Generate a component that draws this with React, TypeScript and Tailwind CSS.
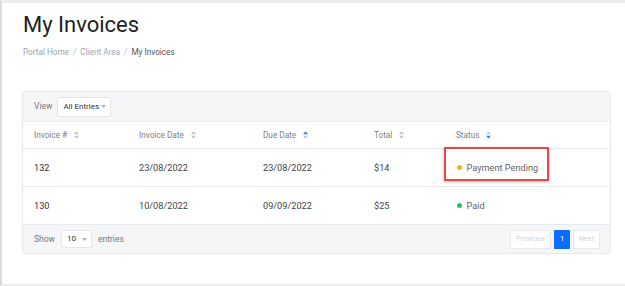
type Row = {
  id: string;
  invoiceDate: string;
  dueDate: string;
  total: string;
  status: "Payment Pending" | "Paid";
};

const rows: Row[] = [
  { id: "132", invoiceDate: "23/08/2022", dueDate: "23/08/2022", total: "$14", status: "Payment Pending" },
  { id: "130", invoiceDate: "10/08/2022", dueDate: "09/09/2022", total: "$25", status: "Paid" },
];

const cols = "grid grid-cols-[105px_124px_111px_82px_1fr] pl-[11px]";

function SortIcon({ active = "none" }: { active?: "none" | "up" | "down" }) {
  const up = active === "up" ? "#3b82f6" : active === "down" ? "#b9c9f5" : "#c4c8ce";
  const down = active === "down" ? "#3b82f6" : active === "up" ? "#b9c9f5" : "#c4c8ce";
  return (
    <svg width="5" height="8" viewBox="0 0 6 9" className="ml-[7px]">
      <path d="M3 0 L6 3.5 H0 Z" fill={up} />
      <path d="M3 9 L6 5.5 H0 Z" fill={down} />
    </svg>
  );
}

function Select({ label, w, h }: { label: string; w: string; h: string }) {
  return (
    <div
      className={`shrink-0 flex items-center justify-between bg-white border border-[#e3e6ea] rounded-[2px] pl-[5px] pr-[4px] text-[8px] text-[#333] whitespace-nowrap ${w} ${h}`}
    >
      <span>{label}</span>
      <svg width="5" height="3" viewBox="0 0 5 3">
        <path d="M0 0 H5 L2.5 3 Z" fill="#b0b5bb" />
      </svg>
    </div>
  );
}

export default function App() {
  return (
    <div
      className="w-[625px] h-[286px] bg-white border-t-[3px] border-t-[#ececec] border-l-2 border-l-[#dcdcdc] border-b-2 border-b-[#ececec] overflow-hidden"
      style={{ fontFamily: "Roboto, 'Liberation Sans', sans-serif" }}
    >
      <div className="pl-[20px] pr-[14px]">
        {/* heading */}
        <h1 className="pt-[9px] pl-[1px] text-[22px] leading-[26px] text-[#222] font-normal">My Invoices</h1>
        <div className="mt-[8px] flex items-center gap-[4px] text-[8.2px] leading-[12px] pl-[1px]">
          <span className="text-[#a0a4a8]">Portal Home</span>
          <span className="text-[#b5b8bb]">/</span>
          <span className="text-[#9aa8b8]">Client Area</span>
          <span className="text-[#b5b8bb]">/</span>
          <span className="text-[#555]">My Invoices</span>
        </div>

        {/* table card */}
        <div className="relative mt-[33px] border border-[#e6e8eb] rounded-[4px] bg-[#f5f6f8] overflow-hidden">
          <div className="h-[29px] flex items-center pl-[11px] gap-[5px] text-[8.5px] text-[#777]">
            <span>View</span>
            <Select label="All Entries" w="w-[54px]" h="h-[20px]" />
          </div>

          <div className={`${cols} bg-white h-[27px] items-center border-t border-[#eceef0] text-[8.2px] text-[#7a7f85]`}>
            <div className="flex items-center">Invoice #<SortIcon /></div>
            <div className="flex items-center">Invoice Date<SortIcon /></div>
            <div className="flex items-center">Due Date<SortIcon active="up" /></div>
            <div className="flex items-center">Total<SortIcon /></div>
            <div className="flex items-center">Status<SortIcon active="down" /></div>
          </div>

          {rows.map((r) => (
            <div
              key={r.id}
              className={`${cols} relative bg-white h-[38px] items-center border-t border-[#e8eaed] text-[9.2px] text-[#444]`}
            >
              <div className="text-[#2d3250]">{r.id}</div>
              <div>{r.invoiceDate}</div>
              <div>{r.dueDate}</div>
              <div>{r.total}</div>
              <div className="flex items-center gap-[5px] pl-[1px] text-[#666]">
                <span
                  className={`w-[4.5px] h-[4.5px] rounded-full ${r.status === "Paid" ? "bg-[#22c55e]" : "bg-[#f5b800]"}`}
                />
                <span>{r.status}</span>
              </div>
              {r.status === "Payment Pending" && (
                <div className="absolute left-[421px] top-[-2px] w-[105px] h-[34px] border-2 border-[#e8474b] shadow-[0_1px_3px_rgba(0,0,0,0.25)]" />
              )}
            </div>
          ))}

          <div className="h-[29px] flex items-center justify-between border-t border-[#e8eaed] pl-[11px] pr-[10px] text-[8.5px] text-[#777]">
            <div className="flex items-center gap-[6px]">
              <span>Show</span>
              <Select label="10" w="w-[31px]" h="h-[18px]" />
              <span>entries</span>
            </div>
            <div className="flex items-center gap-[3px] text-[7.5px]">
              <div className="h-[19px] w-[41px] flex items-center justify-center bg-white border border-[#e6e8eb] rounded-[1px] text-[#d0d3d7]">Previous</div>
              <div className="h-[19px] w-[16px] flex items-center justify-center bg-[#0d6efd] rounded-[1px] text-white">1</div>
              <div className="h-[19px] w-[27px] flex items-center justify-center bg-white border border-[#e6e8eb] rounded-[1px] text-[#d0d3d7]">Next</div>
            </div>
          </div>
        </div>
      </div>
    </div>
  );
}
